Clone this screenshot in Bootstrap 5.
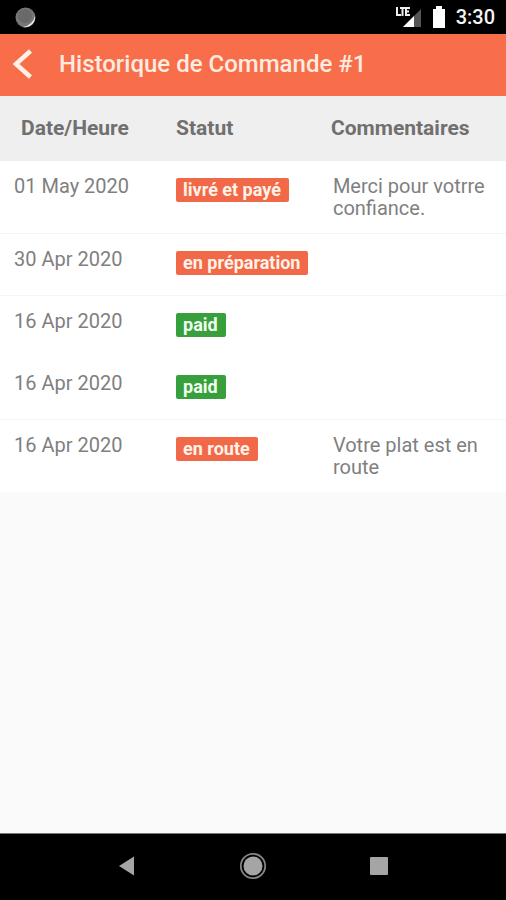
<!DOCTYPE html>
<html lang="fr">
<head>
<meta charset="utf-8">
<meta name="viewport" content="width=device-width, initial-scale=1">
<title>Historique de Commande #1</title>
<link href="https://cdn.jsdelivr.net/npm/bootstrap@5.3.0/dist/css/bootstrap.min.css" rel="stylesheet">
<style>
body { font-family: Roboto, "Liberation Sans", sans-serif; background: #fafafa; color: #7a7a7a; }
.status-bar { background: #000; height: 34px; padding: 0 11px 0 15px; }
.clock { font-size: 20px; line-height: 24px; font-weight: 500; color: #f4f4f4; }
.app-bar { background: #f96e4a; height: 62px; padding: 0 12px 2px; gap: 26px; }
.app-title { font-size: 24px; line-height: 28px; font-weight: 500; color: #ffece0; }
.history { table-layout: fixed; font-size: 20px; line-height: 22px; }
.history > thead th { background: #efefef; color: #707070; font-size: 21px; font-weight: 700; padding: 21px 0 22px; border: 0; }
.history > tbody td { background: #fff; color: #7f7f7f; padding: 14px 0 14px; border: 0; height: 62px; }
.history > tbody tr.ruled td { border-bottom: 1px solid #f5f5f5; }
.history > thead th:first-child { padding-left: 21px; }
.history > tbody td:first-child { padding-left: 14px; }
.history > tbody td:last-child { padding-left: 2px; padding-right: 14px; }
.col-date { width: 34.8%; }
.col-status { width: 30.6%; }
.state { display: inline-block; font-size: 18px; line-height: 20px; font-weight: 700; padding: 2px 8px 2px 7px; border-radius: 2px; color: #fff3e8; margin-top: 3px; vertical-align: top; }
.state-order { background: #f2694a; }
.state-paid { background: #389f3d; color: #f1fff0; }
.nav-keys { background: #000; height: 67px; border-top: 1px solid #777; padding-bottom: 2px; }
.nav-keys button { width: 126px; }
</style>
<script src="https://cdn.jsdelivr.net/npm/bootstrap@5.3.0/dist/js/bootstrap.bundle.min.js" defer></script>
</head>
<body class="d-flex flex-column min-vh-100">
<div class="status-bar d-flex align-items-center justify-content-between">
  <svg width="21" height="21" viewBox="0 0 21 21" aria-hidden="true"><circle cx="10.500" cy="10.500" r="10" fill="#777"/><path d="M20 9A10 10 0 0 1 8 20Q18 18 20 9Z" fill="#eee"/><circle cx="10" cy="9" r="7" fill="#696969"/></svg>
  <div class="d-flex align-items-center">
    <svg class="me-2" width="30" height="24" viewBox="0 0 30 24" aria-hidden="true"><path d="M11 22 29 4V22Z" fill="#555"/><path d="M11 22 22 11V22Z" fill="#fff"/><path d="M5 2V10H9M8 3H13M10.500 3V11M18 3H14V10H18M14 6.500H17" fill="none" stroke="#eee" stroke-width="2"/></svg>
    <svg class="me-2" width="18" height="24" viewBox="0 0 18 24" aria-hidden="true"><path d="M3 4H6V1H12V4H15V23H3Z" fill="#fff"/></svg>
    <span class="clock">3:30</span>
  </div>
</div>
<header class="app-bar d-flex align-items-center">
  <button type="button" class="btn p-0 border-0 d-flex" aria-label="Retour"><svg width="21" height="32" viewBox="0 0 21 32"><path d="M18.500 3 4 16 18.500 29" fill="none" stroke="#fff0e8" stroke-width="4.500"/></svg></button>
  <h1 class="app-title m-0">Historique de Commande #1</h1>
</header>
<main class="flex-grow-1">
  <table class="table history mb-0 align-top">
    <colgroup><col class="col-date"><col class="col-status"><col></colgroup>
    <thead><tr><th scope="col">Date/Heure</th><th scope="col">Statut</th><th scope="col">Commentaires</th></tr></thead>
    <tbody>
      <tr class="ruled"><td>01 May 2020</td><td><span class="state state-order">livré et payé</span></td><td>Merci pour votrre confiance.</td></tr>
      <tr class="ruled"><td>30 Apr 2020</td><td><span class="state state-order">en préparation</span></td><td></td></tr>
      <tr><td>16 Apr 2020</td><td><span class="state state-paid">paid</span></td><td></td></tr>
      <tr class="ruled"><td>16 Apr 2020</td><td><span class="state state-paid">paid</span></td><td></td></tr>
      <tr><td>16 Apr 2020</td><td><span class="state state-order">en route</span></td><td>Votre plat est en route</td></tr>
    </tbody>
  </table>
</main>
<nav class="nav-keys d-flex align-items-center justify-content-center" aria-label="Système">
  <button type="button" class="btn p-0 border-0" aria-label="Précédent"><svg width="28" height="28" viewBox="0 0 28 28"><path d="M6 14 21 4.500V23.500Z" fill="#a5a5a5"/></svg></button>
  <button type="button" class="btn p-0 border-0" aria-label="Accueil"><svg width="28" height="28" viewBox="0 0 28 28"><circle cx="14" cy="14" r="12.200" fill="none" stroke="#858585" stroke-width="1.800"/><circle cx="14" cy="14" r="9.500" fill="#a5a5a5"/></svg></button>
  <button type="button" class="btn p-0 border-0" aria-label="Applications récentes"><svg width="28" height="28" viewBox="0 0 28 28"><rect x="5" y="5" width="18" height="18" rx="1" fill="#a5a5a5"/></svg></button>
</nav>
</body>
</html>
